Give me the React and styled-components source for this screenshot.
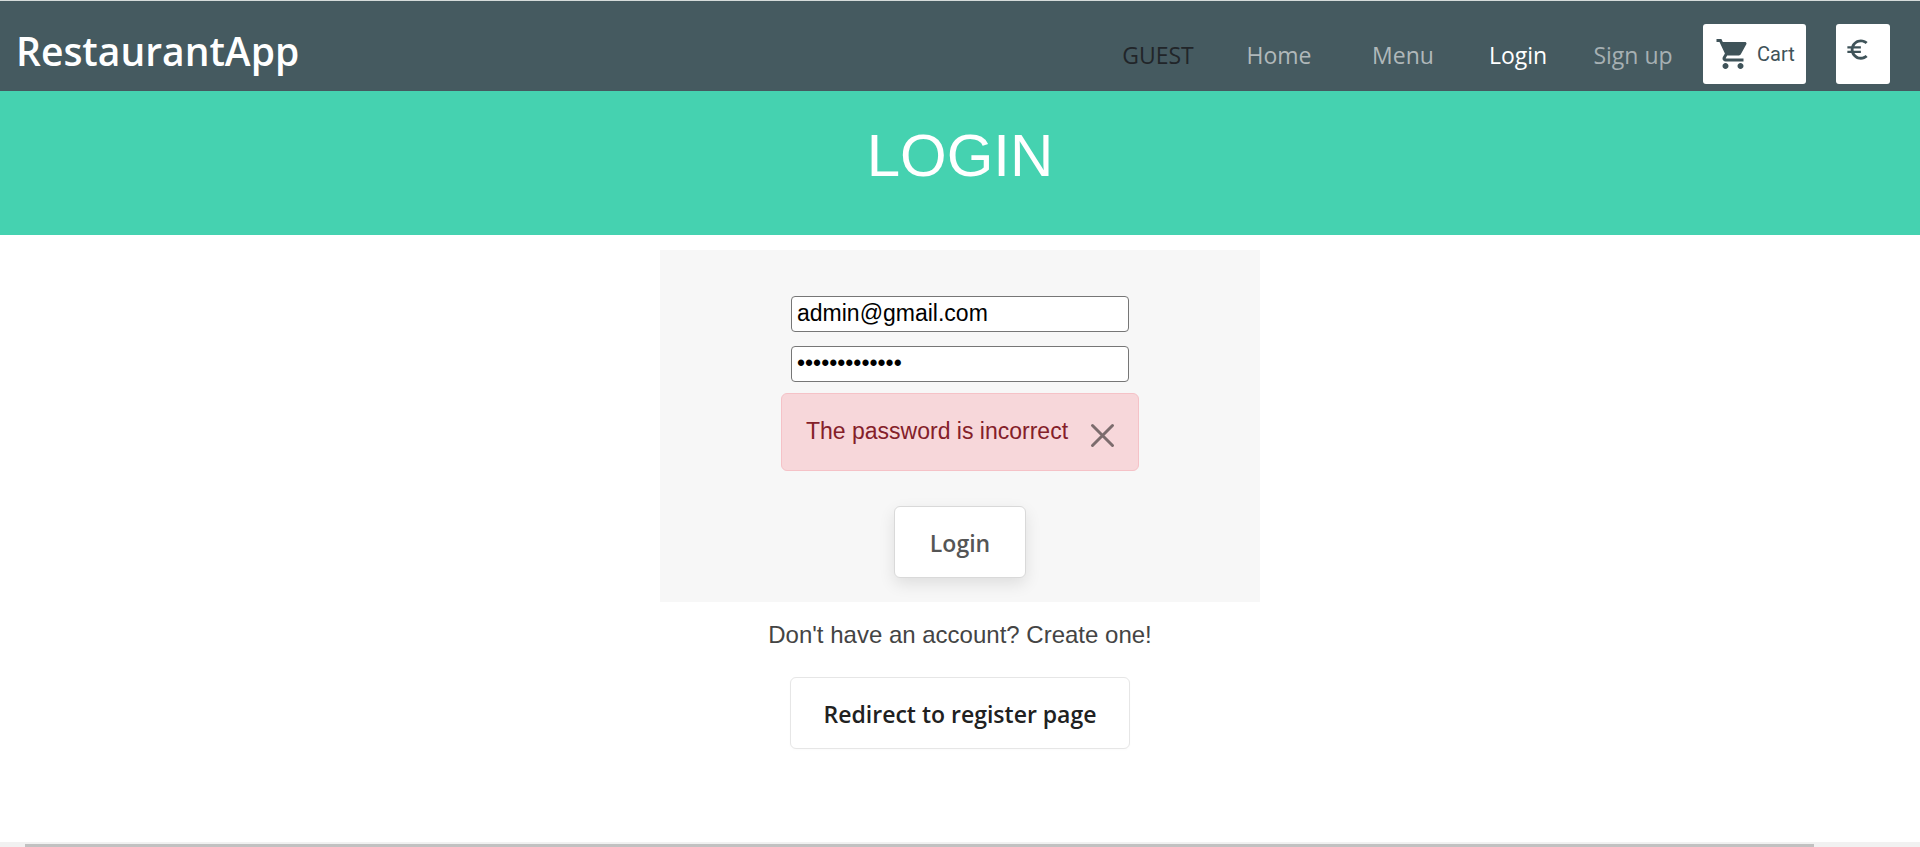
import React, { useState } from "react";
import styled, { createGlobalStyle } from "styled-components";

const sans = `"Liberation Sans", Arial, sans-serif`;
const humanist = `"Segoe UI", "Open Sans", "Noto Sans", sans-serif`;

const GlobalStyle = createGlobalStyle`
  *, *::before, *::after { box-sizing: border-box; }
  body { margin: 0; background: #fff; font-family: ${sans}; font-size: 24px; line-height: 36px; color: #444; }
  button, input { font: inherit; }
`;

const Page = styled.div`
  min-height: 100vh;
  display: flex;
  flex-direction: column;
`;

const Header = styled.header`
  display: flex;
  align-items: flex-start;
  height: 91px;
  padding: 23px 30px 0 16px;
  border-top: 1px solid #d5dbda;
  background: #455a60;
  font-family: ${humanist};
`;

const Brand = styled.a`
  margin-right: auto;
  color: #fff;
  font-size: 39px;
  font-weight: 600;
  line-height: 54px;
  text-decoration: none;
`;

const Nav = styled.nav`
  display: flex;
  align-items: center;
  margin-right: 8px;
  padding-top: 13px;
`;

const NavText = styled.span`
  width: 118px;
  color: #212529;
  font-size: 23px;
  text-align: center;
`;

const NavLink = styled.a`
  width: ${(p) => (p.$narrow ? "106px" : "124px")};
  color: ${(p) => (p.$active ? "#fff" : p.$muted ? "#a6b0b3" : "#b0b8ba")};
  font-size: 23px;
  text-align: center;
  text-decoration: none;
`;

const Tools = styled.div`
  display: flex;
  gap: 30px;
`;

const ToolButton = styled.button`
  display: flex;
  align-items: ${(p) => (p.$top ? "flex-start" : "center")};
  gap: 6px;
  width: ${(p) => (p.$top ? "54px" : "103px")};
  height: 60px;
  padding: ${(p) => (p.$top ? "12px 8px" : "12px")};
  border: 0;
  border-radius: 3px;
  background: #fff;
  color: #3f5359;
  font-family: Roboto, sans-serif;
  font-size: 20px;
  line-height: 36px;
  white-space: nowrap;
  svg { flex: none; fill: currentColor; }
`;

const Banner = styled.section`
  height: 144px;
  padding-top: 29px;
  background: #45d2b0;
  text-align: center;
`;

const Title = styled.h1`
  margin: 0;
  color: #fff;
  font-size: 60px;
  font-weight: 400;
  line-height: 72px;
`;

const Main = styled.main`
  flex: 1;
  display: flex;
  flex-direction: column;
  align-items: center;
  padding: 15px 16px;
`;

const LoginForm = styled.form`
  display: flex;
  flex-direction: column;
  align-items: center;
  width: 100%;
  max-width: 600px;
  padding: 46px 16px 24px;
  background: #f7f7f7;
`;

const Field = styled.input`
  width: 338px;
  max-width: 100%;
  height: 36px;
  margin-bottom: ${(p) => (p.$last ? "11px" : "14px")};
  padding: 0 5px 1px;
  border: 1px solid #767676;
  border-radius: 4px;
  background: #fff;
  color: #000;
  font-size: 23px;
  line-height: 32px;
  outline: 0;
`;

const Alert = styled.div`
  display: flex;
  align-items: flex-start;
  justify-content: space-between;
  width: 358px;
  max-width: 100%;
  height: 78px;
  margin-bottom: 35px;
  padding: 19px 23px 19px 24px;
  border: 1px solid #f5c2c7;
  border-radius: 6px;
  background: #f7d7da;
  color: #842029;
  font-size: 23px;
`;

const Close = styled.button`
  display: flex;
  padding: 10px 0 0;
  border: 0;
  background: none;
  color: #7c6c6d;
`;

const Button = styled.button`
  display: flex;
  align-items: center;
  justify-content: center;
  height: 72px;
  width: ${(p) => (p.$wide ? "340px" : "132px")};
  padding: 2px 0 0;
  border: 1px solid ${(p) => (p.$wide ? "#e6e6e6" : "#d9d9d9")};
  border-radius: 6px;
  background: #fff;
  color: ${(p) => (p.$wide ? "#212121" : "#555")};
  font-family: ${humanist};
  font-size: 23px;
  font-weight: 600;
  box-shadow: ${(p) => (p.$wide ? "0 1px 3px rgba(0,0,0,.02)" : "0 6px 16px rgba(0,0,0,.1)")};
`;

const Prompt = styled.p`
  margin: 15px 0 24px;
`;

const ScrollTrack = styled.div`
  height: 5px;
  padding: 2px 106px 0 25px;
  background: #f1f1f1;
`;

const ScrollThumb = styled.div`
  height: 3px;
  background: #c1c1c1;
`;

export default function App() {
  const [email, setEmail] = useState("admin@gmail.com");
  const [password, setPassword] = useState("administrator");

  return (
    <Page>
      <GlobalStyle />
      <Header>
        <Brand href="#">RestaurantApp</Brand>
        <Nav>
          <NavText>GUEST</NavText>
          <NavLink href="#home">Home</NavLink>
          <NavLink href="#menu">Menu</NavLink>
          <NavLink href="#login" $active $narrow>Login</NavLink>
          <NavLink href="#signup" $muted>Sign up</NavLink>
        </Nav>
        <Tools>
          <ToolButton type="button">
            <svg width="36" height="36" viewBox="0 0 24 24" aria-hidden="true">
              <path d="M7 18c-1.1 0-1.99.9-1.99 2S5.9 22 7 22s2-.9 2-2-.9-2-2-2zM1 2v2h2l3.6 7.59-1.35 2.45c-.16.28-.25.61-.25.96 0 1.1.9 2 2 2h12v-2H7.42c-.14 0-.25-.11-.25-.25l.03-.12.9-1.63h7.45c.75 0 1.41-.41 1.75-1.03l3.58-6.49c.08-.14.12-.31.12-.48 0-.55-.45-1-1-1H5.21l-.94-2H1zm16 16c-1.1 0-1.99.9-1.99 2s.89 2 1.99 2 2-.9 2-2-.9-2-2-2z" />
            </svg>
            Cart
          </ToolButton>
          <ToolButton type="button" $top aria-label="Currency">
            <svg width="27" height="27" viewBox="0 0 24 24" aria-hidden="true">
              <path d="M15 18.5c-2.51 0-4.68-1.42-5.76-3.5H15v-2H8.58c-.05-.33-.08-.66-.08-1s.03-.67.08-1H15V9H9.24C10.32 6.92 12.5 5.5 15 5.5c1.61 0 3.09.59 4.23 1.57L21 5.3C19.41 3.87 17.3 3 15 3c-3.92 0-7.24 2.51-8.48 6H3v2h3.06c-.04.33-.06.66-.06 1s.02.67.06 1H3v2h3.52c1.24 3.49 4.56 6 8.48 6 2.31 0 4.41-.87 6-2.3l-1.78-1.77c-1.13.98-2.6 1.57-4.22 1.57z" />
            </svg>
          </ToolButton>
        </Tools>
      </Header>
      <Banner>
        <Title>LOGIN</Title>
      </Banner>
      <Main>
        <LoginForm onSubmit={(e) => e.preventDefault()}>
          <Field type="email" aria-label="Email" value={email} onChange={(e) => setEmail(e.target.value)} />
          <Field $last type="password" aria-label="Password" value={password} onChange={(e) => setPassword(e.target.value)} />
          <Alert role="alert">
            The password is incorrect
            <Close type="button" aria-label="Close">
              <svg width="25" height="25" viewBox="0 0 25 25" fill="none" stroke="currentColor" strokeWidth="3" strokeLinecap="round" aria-hidden="true">
                <path d="M2.5 2.5l20 20M22.5 2.5l-20 20" />
              </svg>
            </Close>
          </Alert>
          <Button type="submit">Login</Button>
        </LoginForm>
        <Prompt>Don't have an account? Create one!</Prompt>
        <Button type="button" $wide>Redirect to register page</Button>
      </Main>
      <ScrollTrack>
        <ScrollThumb />
      </ScrollTrack>
    </Page>
  );
}
